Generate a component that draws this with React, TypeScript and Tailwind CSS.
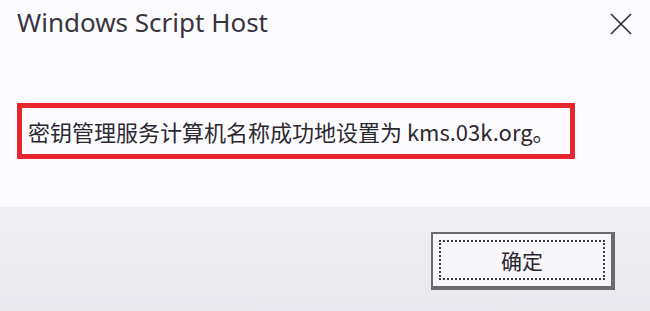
import React from 'react';

export default function App() {
  return (
    <div className="w-[650px] h-[311px] flex flex-col bg-[#fcfcfe] overflow-hidden font-['Noto_Sans','Noto_Sans_CJK_SC',sans-serif] text-[#2a2630]">
      {/* Title bar */}
      <div className="h-[46px] flex items-start justify-between pl-[17px] pr-[18px]">
        <div className="pt-[5px] text-[26px] leading-[34px] text-[#3a3440]">Windows Script Host</div>
        <svg className="mt-[13px]" width="22" height="22" viewBox="0 0 22 22">
          <path d="M1 1 L21 21 M21 1 L1 21" stroke="#2b2b33" strokeWidth="1.6" />
        </svg>
      </div>

      {/* Message */}
      <div className="h-[161px] pl-[17px] pt-[57px]">
        <div className="w-[558px] h-[56px] border-[5px] border-[#e8242c] flex items-center pl-[6px]">
          <span className="text-[22px] leading-none text-[#2b2830] font-['Noto_Sans_CJK_SC',sans-serif]">
            密钥管理服务计算机名称成功地设置为 kms.03k.org。
          </span>
        </div>
      </div>

      {/* Footer */}
      <div className="flex-1 bg-gradient-to-b from-[#efeef3] to-[#e9e8ee] flex justify-end items-start pt-[25px] pr-[35px]">
        <button className="w-[184px] h-[58px] bg-[#f7f7f9] border-[2px] border-[#6a6a70] border-r-[4px] border-b-[4px] p-[6px]">
          <div className="w-full h-full border-[2px] border-dotted border-[#3c3c44] flex items-center justify-center">
            <span className="text-[21px] leading-none text-[#2a2630] font-['Noto_Sans_CJK_SC',sans-serif]">确定</span>
          </div>
        </button>
      </div>
    </div>
  );
}
